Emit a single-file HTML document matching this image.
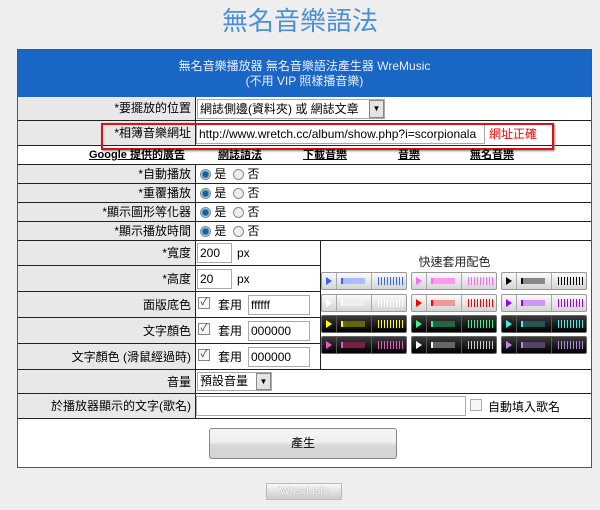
<!DOCTYPE html>
<html><head><meta charset="utf-8"><style>
*{margin:0;padding:0;box-sizing:border-box}
body{width:600px;height:510px;background:#eeeeee;font-family:"Liberation Sans","Noto Sans CJK TC",sans-serif;font-size:12px;color:#000;position:relative;overflow:hidden}
.a{position:absolute}
.title{left:0;width:600px;top:0;text-align:center;font-size:26px;line-height:40px;color:#4a8fd8;font-family:"Noto Sans CJK TC",sans-serif}
.tbl{left:17px;top:49px;width:575px;height:419px;background:#fff;border:1px solid #555}
.hd{left:18px;top:50px;width:573px;height:47px;background:#1a66c4;color:#e8eefc;text-align:center;font-size:12px;line-height:15px;padding-top:9px}
.lab{background:#e8e8e8;text-align:right;padding-right:4px;border-bottom:1px solid #222;border-right:1px solid #222;left:18px;width:178px}
.val{border-bottom:1px solid #222;left:196px;width:395px}
.inp{position:absolute;background:#fff;border:1px solid #aaa;height:20px;font-size:12px;padding-left:2px;line-height:18px;white-space:nowrap;overflow:hidden}
.radio{display:inline-block;width:11px;height:11px;border-radius:50%;border:1px solid #888;vertical-align:-2px;background:#eee}
.radio.on{background:radial-gradient(circle,#1a5fa8 0 2.5px,#6ab 3.5px,#dfe8ee 4.5px)}
.cb{position:absolute;width:12px;height:12px;border:1px solid #888;background:#f4f6f8;font-size:10px;line-height:10px;text-align:center;color:#234}
.pl{position:absolute;width:86px;height:18px;border:1px solid #999;border-radius:2px;background:linear-gradient(#fafafa,#d4d4d4)}
.pl.d{background:linear-gradient(#3a3a3a,#000);border-color:#666}
.pl i{position:absolute;top:0;height:16px;border-right:1px solid #aaa}
.pl.d i{border-color:#555}
.pl b{position:absolute}
.t{position:absolute;line-height:16px}
</style></head><body>
<div class="a title">無名音樂語法</div>
<div class="a tbl"></div>
<div class="a hd">無名音樂播放器 無名音樂語法產生器 WreMusic<br>(不用 VIP 照樣播音樂)</div>

<div class="a lab" style="top:97px;height:24px;line-height:23px">*要擺放的位置</div>
<div class="a val" style="top:97px;height:24px"></div>
<div class="inp" style="left:197px;top:99px;width:188px;height:20px">網誌側邊(資料夾) 或 網誌文章</div>
<div class="a" style="left:369px;top:100px;width:15px;height:18px;background:#e4e4e4;border:1px solid #888;font-size:8px;text-align:center;line-height:16px">▼</div>

<div class="a lab" style="top:121px;height:25px;line-height:25px">*相簿音樂網址</div>
<div class="a val" style="top:121px;height:25px"></div>
<div class="inp" style="left:196px;top:124px;width:289px">http://www.wretch.cc/album/show.php?i=scorpionala</div>
<div class="a" style="left:489px;top:126px;color:#e00;line-height:16px">網址正確</div>
<div class="a" style="left:101px;top:123px;width:453px;height:27px;border:2px solid #e01010;box-shadow:1px 1px 2px #888"></div>

<div class="a" style="left:18px;top:146px;width:573px;height:19px;border-bottom:1px solid #222;font-size:11px;font-weight:bold;line-height:18px">
<span class="a" style="left:71px;text-decoration:underline">Google 提供的廣告</span>
<span class="a" style="left:200px;text-decoration:underline">網誌語法</span>
<span class="a" style="left:285px;text-decoration:underline">下載音樂</span>
<span class="a" style="left:380px;text-decoration:underline">音樂</span>
<span class="a" style="left:452px;text-decoration:underline">無名音樂</span>
</div>

<div class="a lab" style="top:165px;height:19px;line-height:19px">*自動播放</div>
<div class="a val" style="top:165px;height:19px;line-height:19px;padding-left:4px"><span class="radio on"></span> 是 &nbsp;<span class="radio"></span> 否</div>
<div class="a lab" style="top:184px;height:19px;line-height:19px">*重覆播放</div>
<div class="a val" style="top:184px;height:19px;line-height:19px;padding-left:4px"><span class="radio on"></span> 是 &nbsp;<span class="radio"></span> 否</div>
<div class="a lab" style="top:203px;height:19px;line-height:19px">*顯示圖形等化器</div>
<div class="a val" style="top:203px;height:19px;line-height:19px;padding-left:4px"><span class="radio on"></span> 是 &nbsp;<span class="radio"></span> 否</div>
<div class="a lab" style="top:222px;height:19px;line-height:19px">*顯示播放時間</div>
<div class="a val" style="top:222px;height:19px;line-height:19px;padding-left:4px"><span class="radio on"></span> 是 &nbsp;<span class="radio"></span> 否</div>

<div class="a lab" style="top:241px;height:25px;line-height:25px">*寬度</div>
<div class="a lab" style="top:266px;height:26px;line-height:26px">*高度</div>
<div class="a lab" style="top:292px;height:26px;line-height:26px">面版底色</div>
<div class="a lab" style="top:318px;height:26px;line-height:26px">文字顏色</div>
<div class="a lab" style="top:344px;height:26px;line-height:26px">文字顏色 (滑鼠經過時)</div>
<div class="a" style="left:196px;top:241px;width:125px;height:129px;border-right:1px solid #222"></div>
<div class="a" style="left:196px;top:265px;width:125px;border-top:1px solid #222"></div>
<div class="a" style="left:196px;top:291px;width:125px;border-top:1px solid #222"></div>
<div class="a" style="left:196px;top:317px;width:125px;border-top:1px solid #222"></div>
<div class="a" style="left:196px;top:343px;width:125px;border-top:1px solid #222"></div>
<div class="a" style="left:196px;top:369px;width:395px;border-top:1px solid #222"></div>
<div class="inp" style="left:197px;top:243px;width:35px">200</div><div class="t" style="left:237px;top:245px">px</div>
<div class="inp" style="left:197px;top:269px;width:35px">20</div><div class="t" style="left:237px;top:271px">px</div>
<div class="cb" style="left:198px;top:297px">✓</div><div class="t" style="left:218px;top:297px">套用</div><div class="inp" style="left:248px;top:295px;width:62px">ffffff</div>
<div class="cb" style="left:198px;top:323px">✓</div><div class="t" style="left:218px;top:323px">套用</div><div class="inp" style="left:248px;top:321px;width:62px">000000</div>
<div class="cb" style="left:198px;top:349px">✓</div><div class="t" style="left:218px;top:349px">套用</div><div class="inp" style="left:248px;top:347px;width:62px">000000</div>

<div class="a" style="left:322px;top:254px;width:265px;text-align:center;color:#222;line-height:16px">快速套用配色</div>

<div class="pl" style="left:321px;top:272px"><i style="left:0;width:15px"></i><i style="left:15px;width:35px"></i><b style="left:4px;top:4px;border-left:6px solid #36f;border-top:4px solid transparent;border-bottom:4px solid transparent"></b><b style="left:19px;top:5px;width:24px;height:6px;background:#abf;border-left:2px solid #36f"></b><b style="left:56px;top:4px;width:25px;height:8px;background:repeating-linear-gradient(90deg,#36f 0 1px,transparent 1px 3px)"></b></div>
<div class="pl" style="left:411px;top:272px"><i style="left:0;width:15px"></i><i style="left:15px;width:35px"></i><b style="left:4px;top:4px;border-left:6px solid #f6f;border-top:4px solid transparent;border-bottom:4px solid transparent"></b><b style="left:19px;top:5px;width:24px;height:6px;background:#f9e;border-left:2px solid #f6f"></b><b style="left:56px;top:4px;width:25px;height:8px;background:repeating-linear-gradient(90deg,#f6f 0 1px,transparent 1px 3px)"></b></div>
<div class="pl" style="left:501px;top:272px"><i style="left:0;width:15px"></i><i style="left:15px;width:35px"></i><b style="left:4px;top:4px;border-left:6px solid #000;border-top:4px solid transparent;border-bottom:4px solid transparent"></b><b style="left:19px;top:5px;width:24px;height:6px;background:#888;border-left:2px solid #000"></b><b style="left:56px;top:4px;width:25px;height:8px;background:repeating-linear-gradient(90deg,#000 0 1px,transparent 1px 3px)"></b></div>

<div class="pl" style="left:321px;top:294px"><i style="left:0;width:15px"></i><i style="left:15px;width:35px"></i><b style="left:4px;top:4px;border-left:6px solid #fff;border-top:4px solid transparent;border-bottom:4px solid transparent"></b><b style="left:19px;top:5px;width:24px;height:6px;background:#eee;border-left:2px solid #fff"></b><b style="left:56px;top:4px;width:25px;height:8px;background:repeating-linear-gradient(90deg,#fff 0 1px,transparent 1px 3px)"></b></div>
<div class="pl" style="left:411px;top:294px"><i style="left:0;width:15px"></i><i style="left:15px;width:35px"></i><b style="left:4px;top:4px;border-left:6px solid #f00;border-top:4px solid transparent;border-bottom:4px solid transparent"></b><b style="left:19px;top:5px;width:24px;height:6px;background:#e99;border-left:2px solid #f00"></b><b style="left:56px;top:4px;width:25px;height:8px;background:repeating-linear-gradient(90deg,#f00 0 1px,transparent 1px 3px)"></b></div>
<div class="pl" style="left:501px;top:294px"><i style="left:0;width:15px"></i><i style="left:15px;width:35px"></i><b style="left:4px;top:4px;border-left:6px solid #90f;border-top:4px solid transparent;border-bottom:4px solid transparent"></b><b style="left:19px;top:5px;width:24px;height:6px;background:#c9e;border-left:2px solid #90f"></b><b style="left:56px;top:4px;width:25px;height:8px;background:repeating-linear-gradient(90deg,#90f 0 1px,transparent 1px 3px)"></b></div>

<div class="pl d" style="left:321px;top:315px"><i style="left:0;width:15px"></i><i style="left:15px;width:35px"></i><b style="left:4px;top:4px;border-left:6px solid #ff0;border-top:4px solid transparent;border-bottom:4px solid transparent"></b><b style="left:19px;top:5px;width:24px;height:6px;background:#660;border-left:2px solid #ff0"></b><b style="left:56px;top:4px;width:25px;height:8px;background:repeating-linear-gradient(90deg,#ff0 0 1px,transparent 1px 3px)"></b></div>
<div class="pl d" style="left:411px;top:315px"><i style="left:0;width:15px"></i><i style="left:15px;width:35px"></i><b style="left:4px;top:4px;border-left:6px solid #4e8;border-top:4px solid transparent;border-bottom:4px solid transparent"></b><b style="left:19px;top:5px;width:24px;height:6px;background:#264;border-left:2px solid #4e8"></b><b style="left:56px;top:4px;width:25px;height:8px;background:repeating-linear-gradient(90deg,#4e8 0 1px,transparent 1px 3px)"></b></div>
<div class="pl d" style="left:501px;top:315px"><i style="left:0;width:15px"></i><i style="left:15px;width:35px"></i><b style="left:4px;top:4px;border-left:6px solid #4ee;border-top:4px solid transparent;border-bottom:4px solid transparent"></b><b style="left:19px;top:5px;width:24px;height:6px;background:#255;border-left:2px solid #4ee"></b><b style="left:56px;top:4px;width:25px;height:8px;background:repeating-linear-gradient(90deg,#4ee 0 1px,transparent 1px 3px)"></b></div>

<div class="pl d" style="left:321px;top:336px"><i style="left:0;width:15px"></i><i style="left:15px;width:35px"></i><b style="left:4px;top:4px;border-left:6px solid #e5c;border-top:4px solid transparent;border-bottom:4px solid transparent"></b><b style="left:19px;top:5px;width:24px;height:6px;background:#724;border-left:2px solid #e5c"></b><b style="left:56px;top:4px;width:25px;height:8px;background:repeating-linear-gradient(90deg,#e5c 0 1px,transparent 1px 3px)"></b></div>
<div class="pl d" style="left:411px;top:336px"><i style="left:0;width:15px"></i><i style="left:15px;width:35px"></i><b style="left:4px;top:4px;border-left:6px solid #fff;border-top:4px solid transparent;border-bottom:4px solid transparent"></b><b style="left:19px;top:5px;width:24px;height:6px;background:#666;border-left:2px solid #fff"></b><b style="left:56px;top:4px;width:25px;height:8px;background:repeating-linear-gradient(90deg,#ccc 0 1px,transparent 1px 3px)"></b></div>
<div class="pl d" style="left:501px;top:336px"><i style="left:0;width:15px"></i><i style="left:15px;width:35px"></i><b style="left:4px;top:4px;border-left:6px solid #b8e;border-top:4px solid transparent;border-bottom:4px solid transparent"></b><b style="left:19px;top:5px;width:24px;height:6px;background:#546;border-left:2px solid #b8e"></b><b style="left:56px;top:4px;width:25px;height:8px;background:repeating-linear-gradient(90deg,#b8e 0 1px,transparent 1px 3px)"></b></div>

<div class="a lab" style="top:370px;height:24px;line-height:24px">音量</div>
<div class="a val" style="top:370px;height:24px"></div>
<div class="inp" style="left:197px;top:372px;width:75px;height:19px;line-height:17px">預設音量</div>
<div class="a" style="left:256px;top:373px;width:15px;height:17px;background:#e4e4e4;border:1px solid #888;font-size:8px;text-align:center;line-height:15px">▼</div>

<div class="a lab" style="top:394px;height:25px;line-height:25px">於播放器顯示的文字(歌名)</div>
<div class="a val" style="top:394px;height:25px"></div>
<div class="inp" style="left:196px;top:396px;width:270px"></div>
<div class="cb" style="left:470px;top:399px;border-color:#aaa"></div>
<div class="t" style="left:488px;top:399px">自動填入歌名</div>

<div class="a" style="left:209px;top:428px;width:188px;height:31px;border:1px solid #888;border-radius:3px;background:linear-gradient(#f6f6f6 0,#eee 45%,#d8d8d8 55%,#d4d4d4);text-align:center;line-height:29px">產生</div>

<div class="a" style="left:266px;top:483px;width:76px;height:17px;border:1px solid #bbb;background:linear-gradient(#f8f8f8,#ccc);color:#fff;font-size:11px;text-align:center;line-height:15px;text-shadow:0 0 1px #666">WreMusic</div>
</body></html>
